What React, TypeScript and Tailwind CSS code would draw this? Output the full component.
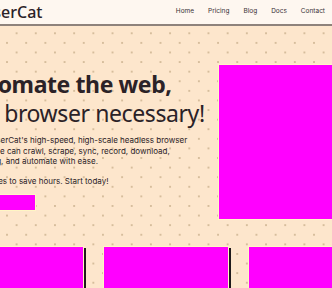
export default function App() {
  return (
    <div className="relative h-[288px] w-[332px] overflow-hidden bg-[#fde6cc] bg-[radial-gradient(circle,#d6bd9c_0.7px,transparent_1.2px),radial-gradient(circle,#d6bd9c_0.7px,transparent_1.2px)] bg-[size:19.2px_19.2px] bg-[position:7px_4.5px,16.6px_14.1px] text-[#2b2227]">
      <nav className="flex h-[26px] items-center justify-between border-b-2 border-[#8e827b] bg-[#fef7f0] pr-[7px]">
        <div className="-ml-[46px] whitespace-nowrap font-['Noto_Sans',sans-serif] text-[16px] font-medium leading-none">
          BrowserCat
        </div>
        <ul className="flex gap-[14px] font-['Inter',sans-serif] text-[6.5px] text-[#3a3035]">
          <li>Home</li>
          <li>Pricing</li>
          <li>Blog</li>
          <li>Docs</li>
          <li>Contact</li>
        </ul>
      </nav>

      <section className="flex items-start pt-[44px]">
        <div className="-ml-[23px] w-[241px] shrink-0">
          <h1 className="-ml-[19px] whitespace-nowrap font-['Noto_Sans',sans-serif] text-[23px] leading-[29px] tracking-[-0.4px]">
            <span className="block font-bold">Automate the web,</span>
            <span className="block pl-[10px]">No browser necessary!</span>
          </h1>
          <p className="mt-[7px] whitespace-nowrap font-['Inter',sans-serif] text-[8px] leading-[10.5px]">
            BrowserCat's high-speed, high-scale headless browser
            <br />
            service can crawl, scrape, sync, record, download,
            <br />
            debug, and automate with ease.
          </p>
          <p className="mt-[9px] whitespace-nowrap font-['Inter',sans-serif] text-[8px] leading-[10.5px]">
            Minutes to save hours. Start today!
          </p>
          <button className="mt-[8px] block h-[17px] w-[59px] border border-[#fff6c4] bg-[#ff00ff]" />
        </div>
        <div className="mt-[-6px] h-[156px] w-[140px] shrink-0 border border-[#fff6c4] bg-[#ff00ff]" />
      </section>

      <section className="-ml-[42px] mt-[26px] flex gap-[19px]">
        <div className="h-[60px] w-[126px] shrink-0 border border-[#fff6c4] bg-[#ff00ff] shadow-[2px_2px_0_#1f1a1c]" />
        <div className="h-[60px] w-[126px] shrink-0 border border-[#fff6c4] bg-[#ff00ff] shadow-[2px_2px_0_#1f1a1c]" />
        <div className="h-[60px] w-[126px] shrink-0 border border-[#fff6c4] bg-[#ff00ff] shadow-[2px_2px_0_#1f1a1c]" />
      </section>
    </div>
  )
}
